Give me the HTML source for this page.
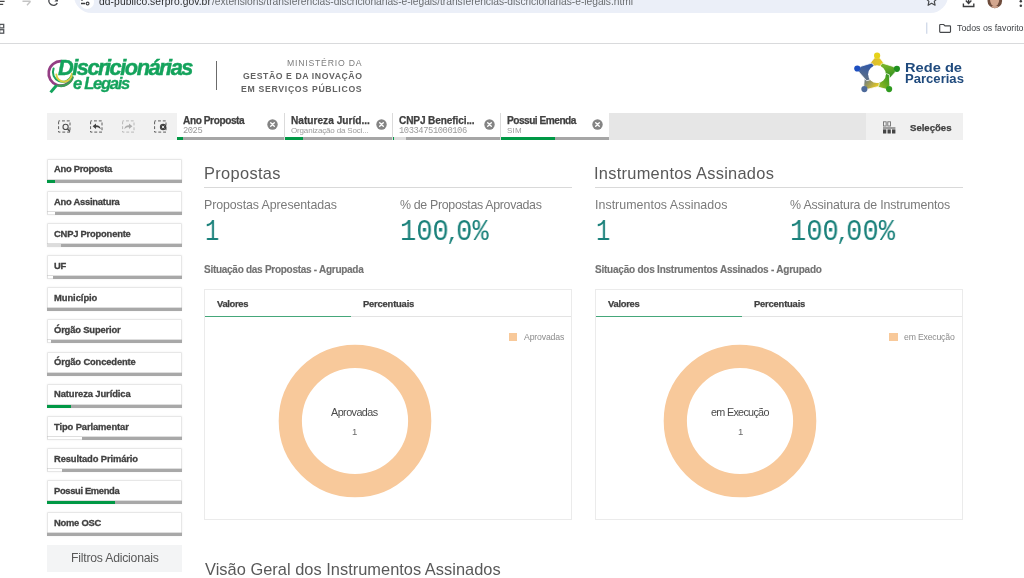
<!DOCTYPE html>
<html lang="pt-BR">
<head>
<meta charset="utf-8">
<title>Transferências Discricionárias e Legais</title>
<style>
*{box-sizing:border-box;margin:0;padding:0}
html,body{width:1024px;height:578px;overflow:hidden;background:#fff;font-family:"Liberation Sans",sans-serif;color:#404040}
.abs{position:absolute}
.t{position:absolute;white-space:nowrap;line-height:0;will-change:transform}
.s{display:inline-block;width:0;height:30px}
svg{position:absolute;overflow:visible}
.sel{position:absolute;top:113px;height:27px;background:#fff}
.sel .bar{position:absolute;left:0;bottom:0;height:3px;width:100%;background:#a6a6a6}
.sel .bar i{position:absolute;left:0;top:0;height:3px}
.f{position:absolute;left:47px;width:135px;height:24px;background:#fff;border:1px solid #e7e7e7;border-radius:1px;box-shadow:0 0 2px rgba(0,0,0,.08)}
.f .bar{position:absolute;left:-1px;bottom:-1px;height:3px;width:135px;background:#a8a8a8;box-shadow:0 -1px 0 rgba(168,168,168,.38)}
.f .bar i{position:absolute;left:0;top:0;height:3px}
.g{background:#009845}
.w{background:#fff;border-left:1px solid #e0e0e0;border-bottom:1px solid #e6e6e6}
.lgw{background:#dcdcdc}
.kv{font-family:'Liberation Mono',monospace;color:#19807a}
.hr{position:absolute;height:1px;background:#d9d9d9}
.box{position:absolute;border:1px solid #ebebeb;background:#fff}
</style>
</head>
<body>

<!-- browser chrome (cropped) -->
<div class="abs" style="left:73.5px;top:-22.5px;width:874.5px;height:35px;border-radius:17.5px;background:#ebeff8"></div>
<div class="abs" style="left:79.5px;top:-5.2px;width:14px;height:14px;border-radius:50%;background:#fff"></div>
<svg style="left:0;top:0" width="1024" height="44" viewBox="0 0 1024 44" fill="none"><path d="M0 1.4H4.6M0 4.4H3.2" stroke="#474747" stroke-width="1.3"/><path d="M22.5 1.3H30.4M27 5.2L30.6 1.3" stroke="#c4c4c4" stroke-width="1.4"/><path d="M49.6 -1.5A4.3 4.3 0 0 0 57.3 3.2" stroke="#4d4f52" stroke-width="1.5"/><path d="M58 -2.5V1.6H54.4z" fill="#4d4f52"/><path d="M84.6 -0.6H89.2M81 3.5H85.2" stroke="#3c3d3f" stroke-width="1.3"/><circle cx="82" cy="-0.6" r="1.3" fill="#3c3d3f"/><circle cx="87.6" cy="3.5" r="1.4" stroke="#3c3d3f" stroke-width="1.1"/><path d="M931.6 -5.4l1.7 3.6 3.9.45-2.9 2.7.8 3.9-3.5-2-3.5 2 .8-3.9-2.9-2.7 3.9-.45z" stroke="#47494c" stroke-width="1.2" stroke-linejoin="round"/><path d="M963.4 3.6V6.5H973.8V3.6" stroke="#3c3d3f" stroke-width="1.4"/><path d="M968.6 -3V3.2M965.8 0.6L968.6 3.4L971.4 0.6" stroke="#3c3d3f" stroke-width="1.4"/><clipPath id="av"><circle cx="994.8" cy="0.9" r="7.3"/></clipPath><g clip-path="url(#av)"><rect x="986" y="-8" width="18" height="18" fill="#6e4c3c"/><ellipse cx="994.6" cy="-0.5" rx="4.6" ry="6.8" fill="#d3a78f"/><ellipse cx="994.8" cy="7.5" rx="3.6" ry="2" fill="#caa08a"/></g><circle cx="1020.8" cy="1.2" r="1.25" fill="#3c3d3f"/><circle cx="1020.8" cy="5.7" r="1.25" fill="#3c3d3f"/><rect x="-0.4" y="24.4" width="4.1" height="3.5" stroke="#55585c" stroke-width="1.3"/><rect x="-0.4" y="29.7" width="4.1" height="3.5" stroke="#55585c" stroke-width="1.3"/><path d="M926.7 22.5V33.8" stroke="#d3dbea" stroke-width="1.4"/><path d="M939.7 25.2a.7.7 0 0 1 .7-.7h3.3l1.3 1.4h4.8a.7.7 0 0 1 .7.7v5a.7.7 0 0 1-.7.7h-9.4a.7.7 0 0 1-.7-.7z" stroke="#46484b" stroke-width="1.15"/></svg>
<div class="abs" style="left:0;top:43px;width:1024px;height:1px;background:#d9dadc"></div>
<!-- header -->
<svg style="left:44px;top:56px" width="36" height="40" viewBox="44 56 36 40" fill="none"><path d="M61 61.2A12.2 12.2 0 1 0 71.6 79.2" stroke="#943d84" stroke-width="2.7" stroke-linecap="round"/><path d="M58.5 85.6A12.2 12.2 0 0 0 72.6 77.4" stroke="#3f9c56" stroke-width="2.5" stroke-linecap="round"/><path d="M53.6 68.5A9 9 0 0 0 71.5 75.8" stroke="#1aa35d" stroke-width="2" stroke-linecap="round"/><path d="M56.3 74.4A6.6 6.6 0 0 0 71.8 73.6" stroke="#d7cf3f" stroke-width="1.9" stroke-linecap="round"/><path d="M56.6 85.2L50.6 92.4" stroke="#14a35c" stroke-width="3"/></svg>
<div class="abs" style="left:216px;top:61px;width:1px;height:29px;background:#6b6b6b"></div>
<svg style="left:850px;top:48px" width="56" height="50" viewBox="850 48 56 50"><defs><linearGradient id="rg0" x1="0" y1="0" x2="1" y2="0"><stop offset="0.1" stop-color="#d9b836"/><stop offset="0.9" stop-color="#e6cc1c"/></linearGradient><linearGradient id="rg1" x1="0" y1="0" x2="1" y2="0"><stop offset="0.1" stop-color="#7ab52a"/><stop offset="0.9" stop-color="#2c8f1f"/></linearGradient><linearGradient id="rg2" x1="0" y1="0" x2="1" y2="0"><stop offset="0.1" stop-color="#3d9a1f"/><stop offset="0.9" stop-color="#9aba26"/></linearGradient><linearGradient id="rg3" x1="0" y1="0" x2="1" y2="0"><stop offset="0.1" stop-color="#e0c626"/><stop offset="0.9" stop-color="#5a6f8f"/></linearGradient><linearGradient id="rg4" x1="0" y1="0" x2="1" y2="0"><stop offset="0.1" stop-color="#5d6f86"/><stop offset="0.9" stop-color="#2c55a8"/></linearGradient></defs><g transform="translate(877.0 74.2) rotate(0.3)"><path d="M-2.7 -16.3L2.7 -16.3L9.2 -8.2L7.6 -5.4L-7.6 -5.4L-9.2 -8.2Z" fill="url(#rg0)" stroke="#fff" stroke-width="0.7"/></g><g transform="translate(877.0 74.2) rotate(74.8)"><path d="M-2.7 -18.4L2.7 -18.4L9.2 -8.2L7.6 -5.4L-7.6 -5.4L-9.2 -8.2Z" fill="url(#rg1)" stroke="#fff" stroke-width="0.7"/></g><g transform="translate(877.0 74.2) rotate(140.9)"><path d="M-2.7 -17.0L2.7 -17.0L9.2 -8.2L7.6 -5.4L-7.6 -5.4L-9.2 -8.2Z" fill="url(#rg2)" stroke="#fff" stroke-width="0.7"/></g><g transform="translate(877.0 74.2) rotate(220.2)"><path d="M-2.7 -17.3L2.7 -17.3L9.2 -8.2L7.6 -5.4L-7.6 -5.4L-9.2 -8.2Z" fill="url(#rg3)" stroke="#fff" stroke-width="0.7"/></g><g transform="translate(877.0 74.2) rotate(-73.9)"><path d="M-2.7 -18.3L2.7 -18.3L9.2 -8.2L7.6 -5.4L-7.6 -5.4L-9.2 -8.2Z" fill="url(#rg4)" stroke="#fff" stroke-width="0.7"/></g><circle cx="877.0" cy="74.2" r="8.9" fill="#fff"/><circle cx="877.1" cy="55.7" r="3.1" fill="#e6d21a"/><circle cx="896.9" cy="68.8" r="3.1" fill="#1f8f1f"/><circle cx="889.1" cy="89.1" r="3.1" fill="#2f9a1f"/><circle cx="864.4" cy="89.1" r="3.1" fill="#4d6a9a"/><circle cx="857.3" cy="68.5" r="3.1" fill="#1d4fc0"/></svg>
<!-- selection bar -->
<div class="abs" style="left:47px;top:113px;width:916px;height:27px;background:#e6e6e6"></div>
<div class="abs" style="left:47px;top:113px;width:130px;height:27px;background:#f1f1f1"></div>
<div class="abs" style="left:866px;top:113px;width:97px;height:27px;background:#f0f0f0"></div>
<div class="sel" style="left:177px;width:107px"><div class="bar"><i class="g" style="width:6px"></i></div></div>
<svg style="left:267.0px;top:119px" width="11" height="11" viewBox="0 0 11 11"><circle cx="5.5" cy="5.5" r="5.2" fill="#848484"/><path d="M3.7 3.7L7.3 7.3M7.3 3.7L3.7 7.3" stroke="#fff" stroke-width="1.35" stroke-linecap="round"/></svg>
<div class="sel" style="left:285px;width:107px"><div class="bar"><i class="g" style="width:18px"></i></div></div>
<svg style="left:375.5px;top:119px" width="11" height="11" viewBox="0 0 11 11"><circle cx="5.5" cy="5.5" r="5.2" fill="#848484"/><path d="M3.7 3.7L7.3 7.3M7.3 3.7L3.7 7.3" stroke="#fff" stroke-width="1.35" stroke-linecap="round"/></svg>
<div class="sel" style="left:393px;width:107px"><div class="bar"><i class="g" style="width:1px"></i><i class="lgw" style="left:1px;width:12px"></i></div></div>
<svg style="left:483.8px;top:119px" width="11" height="11" viewBox="0 0 11 11"><circle cx="5.5" cy="5.5" r="5.2" fill="#848484"/><path d="M3.7 3.7L7.3 7.3M7.3 3.7L3.7 7.3" stroke="#fff" stroke-width="1.35" stroke-linecap="round"/></svg>
<div class="sel" style="left:501px;width:108px"><div class="bar"><i class="g" style="width:54px"></i></div></div>
<svg style="left:591.8px;top:119px" width="11" height="11" viewBox="0 0 11 11"><circle cx="5.5" cy="5.5" r="5.2" fill="#848484"/><path d="M3.7 3.7L7.3 7.3M7.3 3.7L3.7 7.3" stroke="#fff" stroke-width="1.35" stroke-linecap="round"/></svg>
<div class="abs" style="left:284px;top:113px;width:1px;height:27px;background:#dbdbdb"></div>
<div class="abs" style="left:392px;top:113px;width:1px;height:27px;background:#dbdbdb"></div>
<div class="abs" style="left:500px;top:113px;width:1px;height:27px;background:#dbdbdb"></div>
<svg style="left:58px;top:120px;opacity:1" width="13" height="13" viewBox="0 0 13 13" fill="none"><rect x="0.6" y="0.9" width="11.4" height="11.2" stroke="#5c5c5c" stroke-width="1" stroke-dasharray="2.9 1.9" stroke-dashoffset="1.4"/><circle cx="7.6" cy="6.9" r="2.6" fill="#f1f1f1" stroke="#4d4d4d" stroke-width="1.1"/><path d="M9.5 8.9L12 11.6" stroke="#4d4d4d" stroke-width="1.4"/></svg>
<svg style="left:90px;top:120px;opacity:1" width="13" height="13" viewBox="0 0 13 13" fill="none"><rect x="0.6" y="0.9" width="11.4" height="11.2" stroke="#5c5c5c" stroke-width="1" stroke-dasharray="2.9 1.9" stroke-dashoffset="1.4"/><path d="M2.6 6.2L6 3.6v1.7c3 0 4.4 1.5 4.7 4-1-1.5-2.4-2.1-4.7-2.1v1.7z" fill="#404040"/></svg>
<svg style="left:122px;top:120px;opacity:0.38" width="13" height="13" viewBox="0 0 13 13" fill="none"><rect x="0.6" y="0.9" width="11.4" height="11.2" stroke="#5c5c5c" stroke-width="1" stroke-dasharray="2.9 1.9" stroke-dashoffset="1.4"/><path d="M10.4 6.2L7 3.6v1.7c-3 0-4.4 1.5-4.7 4 1-1.5 2.4-2.1 4.7-2.1v1.7z" fill="#404040"/></svg>
<svg style="left:154px;top:120px;opacity:1" width="13" height="13" viewBox="0 0 13 13" fill="none"><rect x="0.6" y="0.9" width="11.4" height="11.2" stroke="#5c5c5c" stroke-width="1" stroke-dasharray="2.9 1.9" stroke-dashoffset="1.4"/><circle cx="9.1" cy="7" r="3.2" fill="#404040"/><path d="M7.9 5.8l2.4 2.4M10.3 5.8L7.9 8.2" stroke="#f1f1f1" stroke-width="0.95"/></svg>
<svg style="left:883px;top:121.5px" width="13" height="12" viewBox="0 0 13 12" fill="none"><rect x="0.45" y="-0.2" width="2.7" height="4.2" stroke="#707070" stroke-width="0.9"/><rect x="4.8" y="-0.2" width="2.7" height="4.2" stroke="#707070" stroke-width="0.9"/><rect x="0" y="5.5" width="12.4" height="1" fill="#4a4a4a"/><rect x="0" y="7.4" width="3.3" height="4.1" fill="#454545"/><rect x="4.5" y="7.4" width="3.3" height="4.1" fill="#454545"/><rect x="9" y="7.4" width="3.4" height="4.1" fill="#454545"/></svg>
<!-- sidebar filters -->
<div class="f" style="top:159px"><div class="bar"><i class="g" style="width:8px"></i></div></div>
<div class="f" style="top:191px"><div class="bar"><i class="w" style="width:8px"></i></div></div>
<div class="f" style="top:223px"><div class="bar"><i class="lgw" style="width:14px"></i></div></div>
<div class="f" style="top:255px"><div class="bar"><i class="w" style="width:5.5px"></i></div></div>
<div class="f" style="top:287px"><div class="bar"></div></div>
<div class="f" style="top:319px"><div class="bar"><i class="w" style="width:4px"></i></div></div>
<div class="f" style="top:352px"><div class="bar"></div></div>
<div class="f" style="top:384px"><div class="bar"><i class="g" style="width:24px"></i></div></div>
<div class="f" style="top:416px"><div class="bar"><i class="w" style="width:34.5px"></i></div></div>
<div class="f" style="top:448px"><div class="bar"><i class="w" style="width:14.5px"></i></div></div>
<div class="f" style="top:480px"><div class="bar"><i class="g" style="width:67.5px"></i></div></div>
<div class="f" style="top:512px"><div class="bar"></div></div>
<div class="abs" style="left:47px;top:545px;width:135px;height:27px;background:#f3f4f5"></div>
<!-- main panels -->
<div class="hr" style="left:204px;top:187px;width:368px"></div>
<div class="box" style="left:204px;top:289px;width:368px;height:231px"></div>
<div class="hr" style="left:205px;top:316px;width:366px;background:#e3e3e3"></div>
<div class="abs" style="left:205px;top:315.5px;width:145.5px;height:1.6px;background:#45a77a"></div>
<div class="abs" style="left:508.7px;top:332.5px;width:8.6px;height:8.7px;background:#f8c99a"></div>
<svg style="left:274.5px;top:340.5px" width="160" height="160" viewBox="-80 -80 160 160"><circle cx="0" cy="0" r="64.7" fill="none" stroke="#f8c99b" stroke-width="23.2"/></svg>
<div class="hr" style="left:595px;top:187px;width:368px"></div>
<div class="box" style="left:595px;top:289px;width:368px;height:231px"></div>
<div class="hr" style="left:596px;top:316px;width:366px;background:#e3e3e3"></div>
<div class="abs" style="left:596px;top:315.5px;width:145.5px;height:1.6px;background:#45a77a"></div>
<div class="abs" style="left:889.4px;top:332.5px;width:8.6px;height:8.7px;background:#f8c99a"></div>
<svg style="left:660px;top:340.5px" width="160" height="160" viewBox="-80 -80 160 160"><circle cx="0" cy="0" r="64.7" fill="none" stroke="#f8c99b" stroke-width="23.2"/></svg>
<div class="t" id="t0" style="left:99.32px;top:-25px;font-family:'Liberation Sans',sans-serif;font-size:10.3px;color:#2c2d2f;letter-spacing:0.068px;"><i class="s"></i>dd-publico.serpro.gov.br</div>
<div class="t" id="t1" style="left:211.70px;top:-25px;font-family:'Liberation Sans',sans-serif;font-size:10.25px;color:#6a6d70;letter-spacing:-0.030px;"><i class="s"></i>/extensions/transferencias-discricionarias-e-legais/transferencias-discricionarias-e-legais.html</div>
<div class="t" id="t2" style="left:957.30px;top:1px;font-family:'Liberation Sans',sans-serif;font-size:8.8px;color:#3c3f43;"><i class="s"></i>Todos os favoritos</div>
<div class="t" id="t3" style="left:58.37px;top:45px;font-family:'Liberation Sans',sans-serif;font-size:21.8px;color:#14a35c;font-weight:bold;font-style:italic;letter-spacing:-1.494px;-webkit-text-stroke:0.45px #14a35c;"><i class="s"></i>Discricionárias</div>
<div class="t" id="t4" style="left:73.49px;top:59px;font-family:'Liberation Sans',sans-serif;font-size:16.6px;color:#14a35c;font-weight:bold;font-style:italic;letter-spacing:-1.306px;-webkit-text-stroke:0.3px #14a35c;"><i class="s"></i>e Legais</div>
<div class="t" id="t5" style="left:287.29px;top:36px;font-family:'Liberation Sans',sans-serif;font-size:8.7px;color:#7d7d7d;letter-spacing:0.776px;"><i class="s"></i>MINISTÉRIO DA</div>
<div class="t" id="t6" style="left:243.14px;top:49px;font-family:'Liberation Sans',sans-serif;font-size:8.7px;color:#636363;font-weight:bold;letter-spacing:0.571px;"><i class="s"></i>GESTÃO E DA INOVAÇÃO</div>
<div class="t" id="t7" style="left:241.42px;top:62px;font-family:'Liberation Sans',sans-serif;font-size:8.7px;color:#636363;font-weight:bold;letter-spacing:0.693px;"><i class="s"></i>EM SERVIÇOS PÚBLICOS</div>
<div class="t" id="t8" style="left:905.02px;top:41.5px;font-family:'Liberation Sans',sans-serif;font-size:12.2px;color:#1f4a7d;font-weight:bold;transform:scaleX(1.2016);transform-origin:0 0;"><i class="s"></i>Rede de</div>
<div class="t" id="t9" style="left:905.12px;top:53px;font-family:'Liberation Sans',sans-serif;font-size:12.2px;color:#1f4a7d;font-weight:bold;transform:scaleX(1.0730);transform-origin:0 0;"><i class="s"></i>Parcerias</div>
<div class="t" id="t10" style="left:183.25px;top:94px;font-family:'Liberation Sans',sans-serif;font-size:10.1px;color:#404040;font-weight:bold;letter-spacing:-0.408px;-webkit-text-stroke:0.25px #404040;"><i class="s"></i>Ano Proposta</div>
<div class="t" id="t11" style="left:182.88px;top:103px;font-family:'Liberation Mono',monospace;font-size:8.8px;color:#9a9a9a;letter-spacing:-0.483px;"><i class="s"></i>2025</div>
<div class="t" id="t12" style="left:290.82px;top:94px;font-family:'Liberation Sans',sans-serif;font-size:10.1px;color:#404040;font-weight:bold;letter-spacing:0.021px;-webkit-text-stroke:0.25px #404040;"><i class="s"></i>Natureza Juríd...</div>
<div class="t" id="t13" style="left:291.12px;top:103px;font-family:'Liberation Sans',sans-serif;font-size:8px;color:#9a9a9a;letter-spacing:-0.158px;"><i class="s"></i>Organização da Soci...</div>
<div class="t" id="t14" style="left:399.09px;top:94px;font-family:'Liberation Sans',sans-serif;font-size:10.1px;color:#404040;font-weight:bold;letter-spacing:-0.121px;-webkit-text-stroke:0.25px #404040;"><i class="s"></i>CNPJ Benefici...</div>
<div class="t" id="t15" style="left:398.86px;top:103px;font-family:'Liberation Mono',monospace;font-size:8.8px;color:#9a9a9a;letter-spacing:-0.438px;"><i class="s"></i>10334751000106</div>
<div class="t" id="t16" style="left:507.07px;top:94px;font-family:'Liberation Sans',sans-serif;font-size:10.1px;color:#404040;font-weight:bold;letter-spacing:-0.484px;-webkit-text-stroke:0.25px #404040;"><i class="s"></i>Possui Emenda</div>
<div class="t" id="t17" style="left:507.39px;top:103px;font-family:'Liberation Sans',sans-serif;font-size:8px;color:#9a9a9a;letter-spacing:0.268px;"><i class="s"></i>SIM</div>
<div class="t" id="t18" style="left:910.47px;top:100.5px;font-family:'Liberation Sans',sans-serif;font-size:9.6px;color:#404040;font-weight:bold;letter-spacing:-0.013px;-webkit-text-stroke:0.25px #404040;"><i class="s"></i>Seleções</div>
<div class="t" id="t19" style="left:54.17px;top:142px;font-family:'Liberation Sans',sans-serif;font-size:9.4px;color:#404040;font-weight:bold;letter-spacing:-0.290px;-webkit-text-stroke:0.3px #404040;"><i class="s"></i>Ano Proposta</div>
<div class="t" id="t20" style="left:54.17px;top:175px;font-family:'Liberation Sans',sans-serif;font-size:9.4px;color:#404040;font-weight:bold;letter-spacing:-0.243px;-webkit-text-stroke:0.3px #404040;"><i class="s"></i>Ano Assinatura</div>
<div class="t" id="t21" style="left:54.01px;top:207px;font-family:'Liberation Sans',sans-serif;font-size:9.4px;color:#404040;font-weight:bold;letter-spacing:-0.207px;-webkit-text-stroke:0.3px #404040;"><i class="s"></i>CNPJ Proponente</div>
<div class="t" id="t22" style="left:53.84px;top:239px;font-family:'Liberation Sans',sans-serif;font-size:9.4px;color:#404040;font-weight:bold;letter-spacing:-0.241px;-webkit-text-stroke:0.3px #404040;"><i class="s"></i>UF</div>
<div class="t" id="t23" style="left:53.77px;top:271px;font-family:'Liberation Sans',sans-serif;font-size:9.4px;color:#404040;font-weight:bold;letter-spacing:-0.051px;-webkit-text-stroke:0.3px #404040;"><i class="s"></i>Município</div>
<div class="t" id="t24" style="left:54.01px;top:303px;font-family:'Liberation Sans',sans-serif;font-size:9.4px;color:#404040;font-weight:bold;letter-spacing:-0.164px;-webkit-text-stroke:0.3px #404040;"><i class="s"></i>Órgão Superior</div>
<div class="t" id="t25" style="left:54.01px;top:335px;font-family:'Liberation Sans',sans-serif;font-size:9.4px;color:#404040;font-weight:bold;letter-spacing:-0.138px;-webkit-text-stroke:0.3px #404040;"><i class="s"></i>Órgão Concedente</div>
<div class="t" id="t26" style="left:53.77px;top:367px;font-family:'Liberation Sans',sans-serif;font-size:9.4px;color:#404040;font-weight:bold;letter-spacing:-0.093px;-webkit-text-stroke:0.3px #404040;"><i class="s"></i>Natureza Jurídica</div>
<div class="t" id="t27" style="left:54.29px;top:400px;font-family:'Liberation Sans',sans-serif;font-size:9.4px;color:#404040;font-weight:bold;letter-spacing:-0.105px;-webkit-text-stroke:0.3px #404040;"><i class="s"></i>Tipo Parlamentar</div>
<div class="t" id="t28" style="left:53.77px;top:432px;font-family:'Liberation Sans',sans-serif;font-size:9.4px;color:#404040;font-weight:bold;letter-spacing:-0.110px;-webkit-text-stroke:0.3px #404040;"><i class="s"></i>Resultado Primário</div>
<div class="t" id="t29" style="left:53.77px;top:464px;font-family:'Liberation Sans',sans-serif;font-size:9.4px;color:#404040;font-weight:bold;letter-spacing:-0.347px;-webkit-text-stroke:0.3px #404040;"><i class="s"></i>Possui Emenda</div>
<div class="t" id="t30" style="left:53.77px;top:496px;font-family:'Liberation Sans',sans-serif;font-size:9.4px;color:#404040;font-weight:bold;letter-spacing:-0.248px;-webkit-text-stroke:0.3px #404040;"><i class="s"></i>Nome OSC</div>
<div class="t" id="t31" style="left:70.75px;top:532px;font-family:'Liberation Sans',sans-serif;font-size:12.2px;color:#595959;letter-spacing:-0.207px;"><i class="s"></i>Filtros Adicionais</div>
<div class="t" id="t32" style="left:203.65px;top:149px;font-family:'Liberation Sans',sans-serif;font-size:16.4px;color:#595959;letter-spacing:0.328px;"><i class="s"></i>Propostas</div>
<div class="t" id="t33" style="left:594.49px;top:149px;font-family:'Liberation Sans',sans-serif;font-size:16.4px;color:#595959;letter-spacing:0.278px;"><i class="s"></i>Instrumentos Assinados</div>
<div class="t" id="t34" style="left:203.88px;top:179px;font-family:'Liberation Sans',sans-serif;font-size:12.4px;color:#7a7a7a;letter-spacing:-0.093px;"><i class="s"></i>Propostas Apresentadas</div>
<div class="t" id="t35" style="left:399.56px;top:179px;font-family:'Liberation Sans',sans-serif;font-size:12.4px;color:#7a7a7a;letter-spacing:-0.330px;"><i class="s"></i>% de Propostas Aprovadas</div>
<div class="t" id="t36" style="left:594.86px;top:179px;font-family:'Liberation Sans',sans-serif;font-size:12.4px;color:#7a7a7a;letter-spacing:0.037px;"><i class="s"></i>Instrumentos Assinados</div>
<div class="t" id="t37" style="left:790.06px;top:179px;font-family:'Liberation Sans',sans-serif;font-size:12.4px;color:#7a7a7a;letter-spacing:-0.166px;"><i class="s"></i>% Assinatura de Instrumentos</div>
<div class="t" id="t38" style="left:204.21px;top:243px;font-family:'Liberation Sans',sans-serif;font-size:10px;color:#737373;font-weight:bold;letter-spacing:-0.276px;-webkit-text-stroke:0.15px #737373;"><i class="s"></i>Situação das Propostas - Agrupada</div>
<div class="t" id="t39" style="left:594.71px;top:243px;font-family:'Liberation Sans',sans-serif;font-size:10px;color:#737373;font-weight:bold;letter-spacing:-0.226px;-webkit-text-stroke:0.15px #737373;"><i class="s"></i>Situação dos Instrumentos Assinados - Agrupado</div>
<div class="t" id="t40" style="left:217.44px;top:277px;font-family:'Liberation Sans',sans-serif;font-size:9.4px;color:#404040;font-weight:bold;letter-spacing:-0.318px;-webkit-text-stroke:0.25px #404040;"><i class="s"></i>Valores</div>
<div class="t" id="t41" style="left:363.12px;top:277px;font-family:'Liberation Sans',sans-serif;font-size:9.4px;color:#404040;font-weight:bold;letter-spacing:-0.189px;-webkit-text-stroke:0.25px #404040;"><i class="s"></i>Percentuais</div>
<div class="t" id="t42" style="left:607.94px;top:277px;font-family:'Liberation Sans',sans-serif;font-size:9.4px;color:#404040;font-weight:bold;letter-spacing:-0.277px;-webkit-text-stroke:0.25px #404040;"><i class="s"></i>Valores</div>
<div class="t" id="t43" style="left:753.62px;top:277px;font-family:'Liberation Sans',sans-serif;font-size:9.4px;color:#404040;font-weight:bold;letter-spacing:-0.189px;-webkit-text-stroke:0.25px #404040;"><i class="s"></i>Percentuais</div>
<div class="t" id="t44" style="left:523.73px;top:310px;font-family:'Liberation Sans',sans-serif;font-size:8.7px;color:#8c8c8c;letter-spacing:-0.152px;"><i class="s"></i>Aprovadas</div>
<div class="t" id="t45" style="left:903.88px;top:310px;font-family:'Liberation Sans',sans-serif;font-size:8.7px;color:#8c8c8c;letter-spacing:-0.191px;"><i class="s"></i>em Execução</div>
<div class="t" id="t46" style="left:331.23px;top:386px;font-family:'Liberation Sans',sans-serif;font-size:10.8px;color:#4a4a4a;letter-spacing:-0.558px;"><i class="s"></i>Aprovadas</div>
<div class="t" id="t47" style="left:710.79px;top:386px;font-family:'Liberation Sans',sans-serif;font-size:10.8px;color:#4a4a4a;letter-spacing:-0.701px;"><i class="s"></i>em Execução</div>
<div class="t" id="t48" style="left:352.27px;top:405px;font-family:'Liberation Sans',sans-serif;font-size:9.6px;color:#6b6b6b;"><i class="s"></i>1</div>
<div class="t" id="t49" style="left:737.77px;top:405px;font-family:'Liberation Sans',sans-serif;font-size:9.6px;color:#6b6b6b;"><i class="s"></i>1</div>
<div class="t" id="t50" style="left:204.93px;top:544.5px;font-family:'Liberation Sans',sans-serif;font-size:16.4px;color:#595959;letter-spacing:0.021px;"><i class="s"></i>Visão Geral dos Instrumentos Assinados</div>
<div class="t kv" style="left:205.31px;top:210px;font-size:28.6px;transform:scaleX(0.8333);transform-origin:0 0"><i class="s"></i>1</div>
<div class="t kv" style="left:399.60px;top:210px;font-size:28.6px;transform:scaleX(0.9470);transform-origin:0 0"><i class="s"></i>100<span style="font-size:.8em;margin:0 -3.3px 0 -2.6px">,</span>0%</div>
<div class="t kv" style="left:595.96px;top:210px;font-size:28.6px;transform:scaleX(0.8333);transform-origin:0 0"><i class="s"></i>1</div>
<div class="t kv" style="left:790.10px;top:210px;font-size:28.6px;transform:scaleX(0.9470);transform-origin:0 0"><i class="s"></i>100<span style="font-size:.8em;margin:0 -3.3px 0 -2.6px">,</span>00%</div>
</body>
</html>
